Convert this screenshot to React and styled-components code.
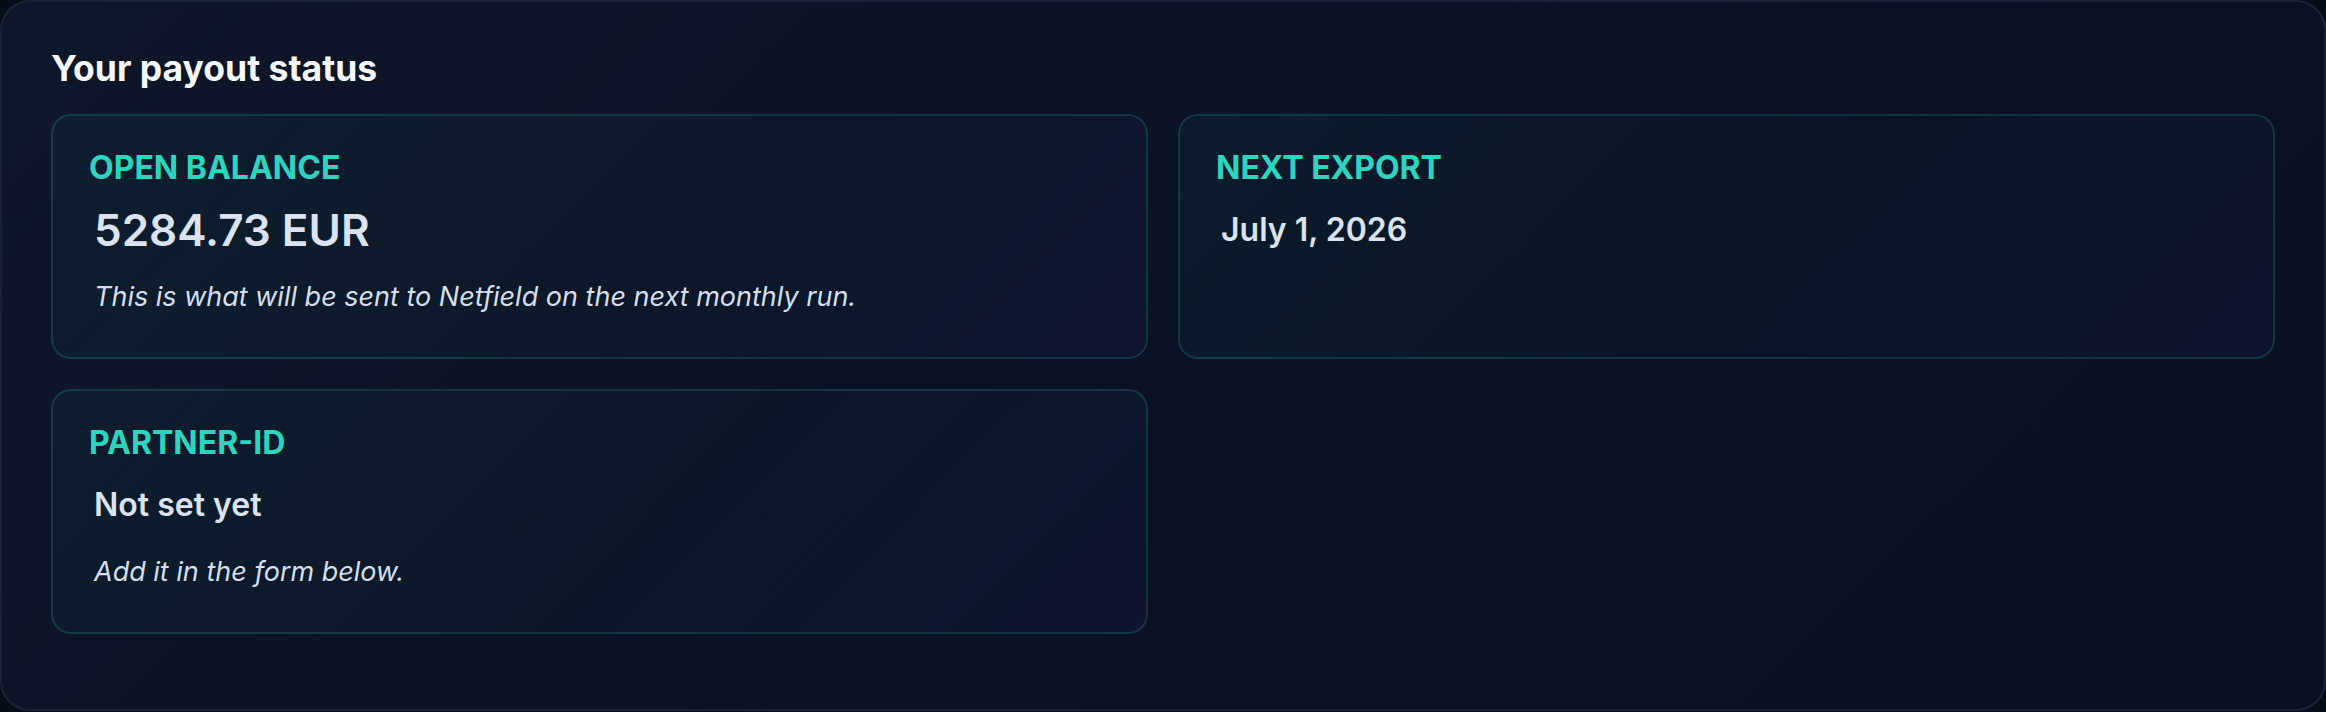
import React from 'react';
import styled, { createGlobalStyle } from 'styled-components';

const GlobalStyle = createGlobalStyle`
  * {
    box-sizing: border-box;
  }

  body {
    margin: 0;
    background: #070c19;
    font-family: 'Inter', 'Noto Sans', sans-serif;
  }
`;

const cards = [
  {
    label: 'OPEN BALANCE',
    value: '5284.73 EUR',
    big: true,
    note: 'This is what will be sent to Netfield on the next monthly run.',
  },
  { label: 'NEXT EXPORT', value: 'July 1, 2026' },
  { label: 'PARTNER-ID', value: 'Not set yet', note: 'Add it in the form below.' },
];

export default function App() {
  return (
    <>
      <GlobalStyle />
      <Panel>
        <Title>Your payout status</Title>
        <CardGrid>
          {cards.map((card, index) => (
            <Card key={index}>
              <Label>{card.label}</Label>
              <Value $big={card.big}>{card.value}</Value>
              {card.note && <Note>{card.note}</Note>}
            </Card>
          ))}
        </CardGrid>
      </Panel>
    </>
  );
}

const Panel = styled.section`
  height: 711px;
  padding: 0 49px;
  border: 2px solid #1b2437;
  border-radius: 30px;
  background: linear-gradient(135deg, #0e1629 0%, #0a1122 55%, #0a1020 100%);
`;

const Title = styled.h2`
  margin: 0;
  padding-top: 46px;
  font-size: 35.5px;
  line-height: 41px;
  font-weight: 700;
  color: #f5f8fc;
`;

const CardGrid = styled.div`
  display: grid;
  grid-template-columns: 1fr 1fr;
  gap: 30px;
  margin-top: 25px;
`;

const Card = styled.div`
  min-height: 245px;
  padding: 33px 36px 36px;
  border: 2px solid rgba(45, 212, 191, 0.18);
  border-radius: 20px;
  background: linear-gradient(
    135deg,
    rgba(20, 184, 166, 0.06) 0%,
    rgba(20, 184, 166, 0.03) 55%,
    rgba(79, 70, 229, 0.07) 100%
  );
`;

const Label = styled.div`
  font-size: 32px;
  line-height: 38px;
  font-weight: 700;
  color: #2dd4bf;
`;

const Value = styled.div`
  margin-top: 12.5px;
  padding-left: 5px;
  font-size: ${(props) => (props.$big ? '44px' : '32px')};
  line-height: 60px;
  font-weight: 600;
  color: #dbe3f1;
`;

const Note = styled.p`
  margin: 19.5px 0 0;
  padding-left: 5px;
  font-size: 27px;
  line-height: 36px;
  font-style: italic;
  color: #d5deed;
`;
